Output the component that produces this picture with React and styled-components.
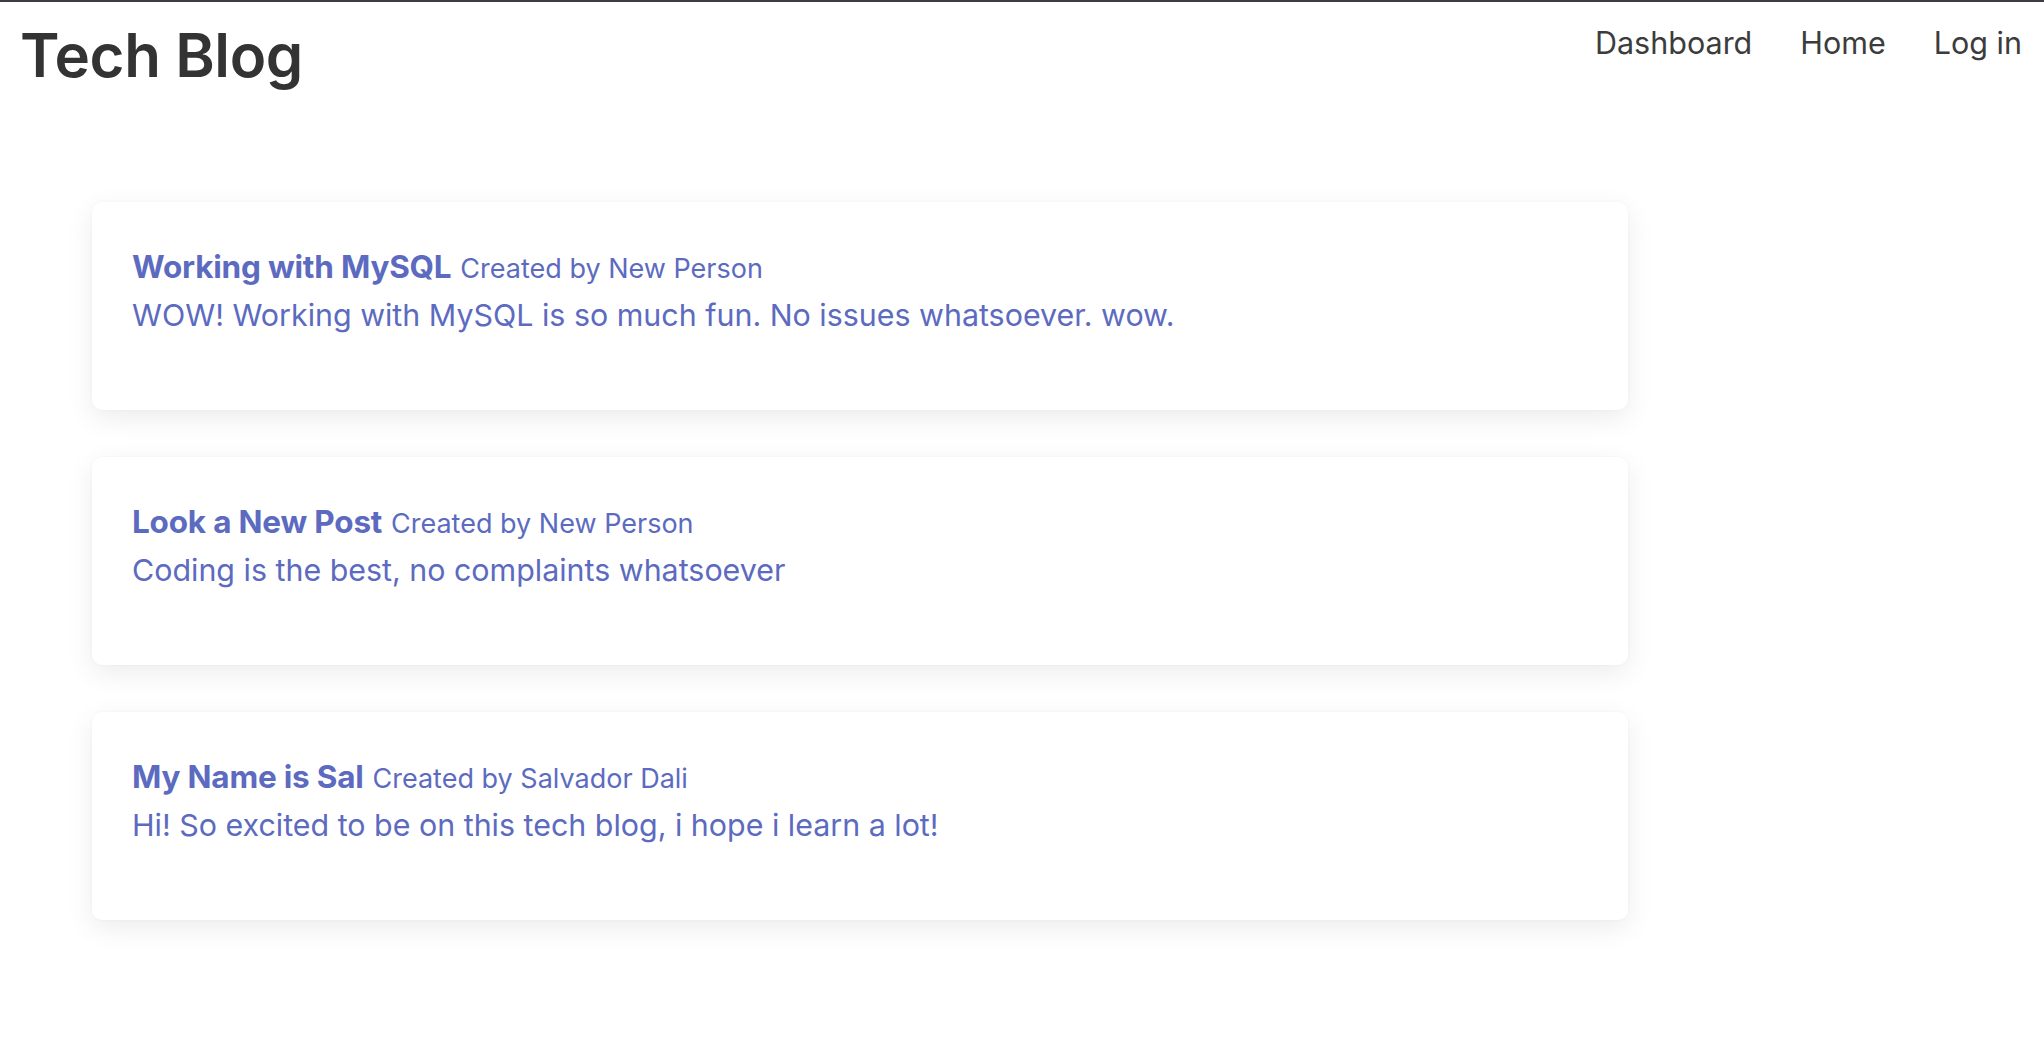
import React from "react";
import styled, { createGlobalStyle } from "styled-components";

const GlobalStyle = createGlobalStyle`
  * { box-sizing: border-box; }
  html, body { margin: 0; padding: 0; background: #ffffff; }
  body {
    font-family: Inter, "Noto Sans", "Liberation Sans", sans-serif;
    border-top: 2px solid #3a3e43;
  }
`;

const Header = styled.header`
  display: flex;
  justify-content: space-between;
  align-items: flex-start;
  padding: 8px 22px 0 20px;
`;

const Brand = styled.h1`
  margin: 9px 0 0 0;
  font-size: 60px;
  line-height: 72px;
  font-weight: 600;
  letter-spacing: -0.4px;
  color: #333333;
`;

const Nav = styled.nav`
  display: flex;
  gap: 48px;
  padding-top: 15px;
`;

const NavLink = styled.a`
  font-size: 30.5px;
  line-height: 36px;
  color: #3c3c3c;
  text-decoration: none;
  cursor: pointer;
`;

const Main = styled.main`
  display: flex;
  flex-direction: column;
  gap: 47px;
  padding: 111px 0 60px 92px;
`;

const Card = styled.article`
  width: 1536px;
  height: 208px;
  background: #ffffff;
  border-radius: 10px;
  box-shadow: 0 0 3px rgba(0, 0, 0, 0.04), 0 8px 28px rgba(0, 0, 0, 0.08);
  padding: 42px 40px 0 40px;
  color: #5c6bc0;
`;

const TitleLine = styled.div`
  font-size: 31.5px;
  line-height: 46px;
`;

const PostTitle = styled.span`
  font-weight: 700;
  letter-spacing: -0.2px;
`;

const Author = styled.span`
  font-size: 27px;
  font-weight: 400;
`;

const Body = styled.p`
  margin: 0;
  font-size: 30.4px;
  line-height: 47px;
`;

const posts = [
  {
    title: "Working with MySQL",
    author: "New Person",
    body: "WOW! Working with MySQL is so much fun. No issues whatsoever. wow.",
  },
  {
    title: "Look a New Post",
    author: "New Person",
    body: "Coding is the best, no complaints whatsoever",
  },
  {
    title: "My Name is Sal",
    author: "Salvador Dali",
    body: "Hi! So excited to be on this tech blog, i hope i learn a lot!",
  },
];

export default function App() {
  return (
    <>
      <GlobalStyle />
      <Header>
        <Brand>Tech Blog</Brand>
        <Nav>
          <NavLink>Dashboard</NavLink>
          <NavLink>Home</NavLink>
          <NavLink>Log in</NavLink>
        </Nav>
      </Header>
      <Main>
        {posts.map((p) => (
          <Card key={p.title}>
            <TitleLine>
              <PostTitle>{p.title}</PostTitle> <Author>Created by {p.author}</Author>
            </TitleLine>
            <Body>{p.body}</Body>
          </Card>
        ))}
      </Main>
    </>
  );
}
